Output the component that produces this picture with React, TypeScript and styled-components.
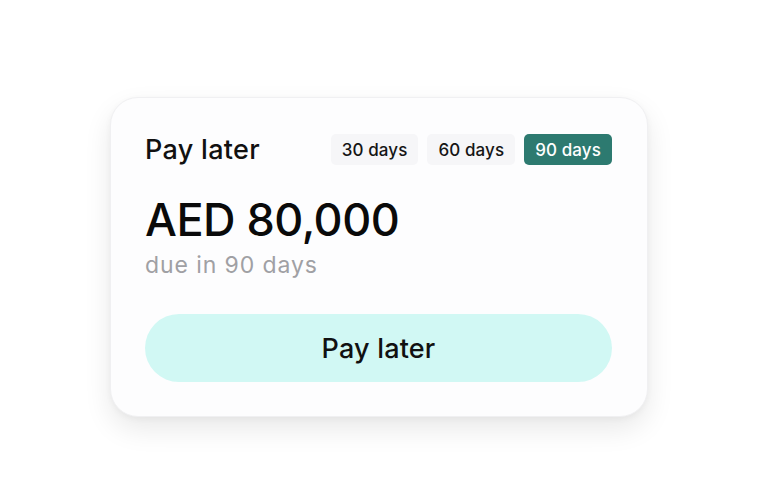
import styled, { createGlobalStyle } from "styled-components"
import { useState } from "react"

const GlobalStyle = createGlobalStyle`
  html, body {
    margin: 0;
    padding: 0;
    background: #ffffff;
    font-family: Inter, "Noto Sans", sans-serif;
    -webkit-font-smoothing: antialiased;
  }
`

const terms = [30, 60, 90]

export default function App () {
  const [selected, setSelected] = useState(90)
  return (
    <>
      <GlobalStyle />
      <Page>
        <Card>
          <Header>
            <Title>Pay later</Title>
            <Tabs>
              {terms.map(t => (
                <Tab key={t} $active={t === selected} onClick={() => setSelected(t)}>
                  {t} days
                </Tab>
              ))}
            </Tabs>
          </Header>
          <Amount>AED 80,000</Amount>
          <Due>due in {selected} days</Due>
          <PayButton>Pay later</PayButton>
        </Card>
      </Page>
    </>
  )
}

const Page = styled.div`
  width: 758px;
  height: 480px;
  display: flex;
  justify-content: center;
  align-items: flex-start;
  padding-top: 97px;
  box-sizing: border-box;
`

const Card = styled.div`
  width: 538px;
  height: 320px;
  box-sizing: border-box;
  padding: 36px 35px 0 34px;
  background: #fdfdfe;
  border: 1px solid #f0f0f2;
  border-radius: 28px;
  box-shadow: 0 12px 28px rgba(0, 0, 0, 0.09), 0 2px 6px rgba(0, 0, 0, 0.04);
  display: flex;
  flex-direction: column;
`

const Header = styled.div`
  display: flex;
  align-items: center;
  justify-content: space-between;
  height: 31px;
`

const Title = styled.div`
  font-size: 27px;
  font-weight: 500;
  color: #111;
  letter-spacing: 0.3px;
`

const Tabs = styled.div`
  display: flex;
  gap: 9px;
`

const Tab = styled.button<{ $active?: boolean }>`
  font-family: inherit;
  height: 31px;
  padding: 0 11px;
  border: none;
  border-radius: 5px;
  font-size: 17px;
  font-weight: 500;
  letter-spacing: 0.1px;
  cursor: pointer;
  background: ${p => p.$active ? "#2d7a70" : "#f6f6f8"};
  color: ${p => p.$active ? "#ffffff" : "#151515"};
`

const Amount = styled.div`
  margin-top: 28px;
  font-size: 45px;
  font-weight: 500;
  color: #0a0a0a;
  letter-spacing: -0.5px;
  line-height: 54px;
`

const Due = styled.div`
  margin-top: 4px;
  font-size: 23px;
  color: #a0a0a4;
  line-height: 28px;
  letter-spacing: 0.9px;
`

const PayButton = styled.button`
  margin-top: 35px;
  height: 68px;
  width: 100%;
  border: none;
  border-radius: 34px;
  background: #d1f8f4;
  font-family: inherit;
  font-size: 27px;
  font-weight: 500;
  color: #111;
  letter-spacing: 0.2px;
  cursor: pointer;
`
